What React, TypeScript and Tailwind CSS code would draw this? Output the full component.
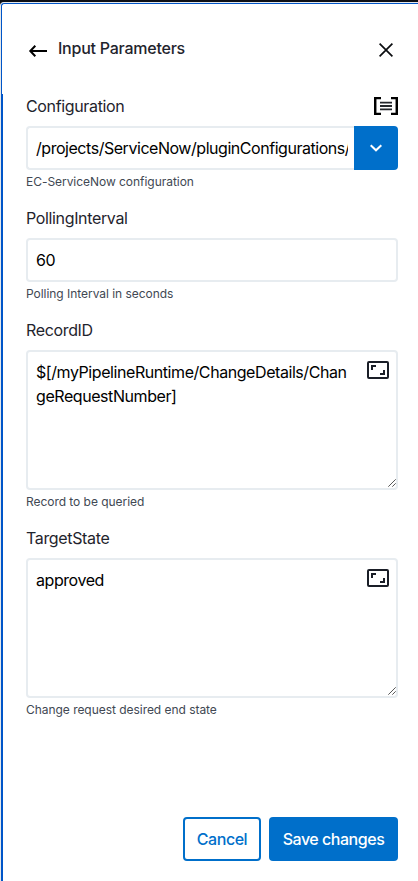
import React from "react";

function BackArrow() {
  return (
    <svg width="20" height="14" viewBox="0 0 20 14" fill="none" stroke="#000" strokeWidth="2">
      <path d="M19 7H2.5M7.3 1.8L2.3 7l5 5.2" />
    </svg>
  );
}

function CloseIcon() {
  return (
    <svg width="14" height="14" viewBox="0 0 14 14" fill="none" stroke="#0b0d10" strokeWidth="1.7">
      <path d="M.6.6l12.8 12.8M13.4.6L.6 13.4" />
    </svg>
  );
}

function BracketIcon() {
  return (
    <svg width="24" height="18" viewBox="0 0 24 18" fill="none">
      <path d="M7 1H1.2v16H7M17 1h5.8v16H17" stroke="#000" strokeWidth="2.5" />
      <path d="M6 5.7h12M6 9h12M6 12.3h12" stroke="#24272c" strokeWidth="1.8" />
    </svg>
  );
}

function ExpandIcon() {
  return (
    <svg width="22" height="18" viewBox="0 0 22 18" fill="none" stroke="#1a1e27" strokeWidth="2">
      <rect x="1" y="1" width="20" height="16" rx="1" />
      <path d="M5 9V5h4M13 13h4V9" />
    </svg>
  );
}

function ResizeGrip() {
  return (
    <svg width="8" height="8" viewBox="0 0 8 8" fill="none" stroke="#444" strokeWidth=".9">
      <path d="M.3 7.7L7.7.3M4.3 7.7l3.4-3.4" />
    </svg>
  );
}

function Field({ label, hint, icon, children }: { label: string; hint: string; icon?: React.ReactNode; children: React.ReactNode }) {
  return (
    <div className="flex flex-col">
      <div className="mb-2 flex h-6 items-center justify-between">
        <span className="text-base tracking-[-0.35px] text-[#1f242d]">{label}</span>
        {icon}
      </div>
      {children}
      <div className="mt-1 text-xs leading-4 tracking-[-0.04px] text-[#414853]">{hint}</div>
    </div>
  );
}

function Area({ text }: { text: string }) {
  return (
    <div className="relative h-[140px] rounded border-2 border-[#e7ecf0] py-2 pl-2 pr-[42px] text-base tracking-[-0.43px] break-all text-black">
      {text}
      <div className="absolute top-[9px] right-[7px]"><ExpandIcon /></div>
      <div className="absolute right-0 bottom-[1px]"><ResizeGrip /></div>
    </div>
  );
}

export default function App() {
  return (
    <div className="flex h-[881px] w-[418px] flex-col overflow-hidden bg-[#0d0f15] pt-[2px] font-['Inter',sans-serif]">
      <div className="flex grow flex-col rounded-tl border-t border-l border-[#e4e7ea] bg-white">
        <div className="flex grow flex-col rounded-tl-[3px] border-t border-l border-[#0055c8]">
          <header className="flex h-[90px] items-center justify-between pr-[25px] pl-[26px]">
            <div className="flex items-center gap-[10px]">
              <div className="pt-[3px]"><BackArrow /></div>
              <h1 className="pb-[2px] text-base font-medium tracking-[-0.24px] text-[#1f242d]">Input Parameters</h1>
            </div>
            <div className="pt-[2px]"><CloseIcon /></div>
          </header>
          <div className="flex grow flex-col border-l border-[#0055c8] pr-5 pb-5 pl-[23px]">
            <main className="flex grow flex-col gap-4">
              <Field label="Configuration" hint="EC-ServiceNow configuration" icon={<BracketIcon />}>
                <div className="flex h-11">
                  <div className="flex w-[328px] items-center rounded-l border-2 border-r-0 border-[#e7ecf0] pr-[6px] pl-2">
                    <div className="overflow-hidden text-base tracking-[-0.46px] whitespace-nowrap text-black">/projects/ServiceNow/pluginConfigurations/</div>
                  </div>
                  <div className="flex w-11 items-center justify-center rounded-r bg-[#006fca]">
                    <svg width="12" height="8" viewBox="0 0 12 8" fill="none" stroke="#fff" strokeWidth="2">
                      <path d="M.7 1.2L6 6.3l5.3-5.1" />
                    </svg>
                  </div>
                </div>
              </Field>
              <Field label="PollingInterval" hint="Polling Interval in seconds">
                <div className="flex h-11 items-center rounded border-2 border-[#e7ecf0] px-2 text-base tracking-[-0.3px] text-black">60</div>
              </Field>
              <Field label="RecordID" hint="Record to be queried">
                <Area text="$[/myPipelineRuntime/ChangeDetails/ChangeRequestNumber]" />
              </Field>
              <Field label="TargetState" hint="Change request desired end state">
                <Area text="approved" />
              </Field>
            </main>
            <footer className="flex justify-end gap-2 text-base font-medium tracking-[-0.47px]">
              <button className="h-11 w-[78px] rounded border-2 border-[#006fca] text-[#006fca]">Cancel</button>
              <button className="h-11 w-[129px] rounded bg-[#006fca] text-white">Save changes</button>
            </footer>
          </div>
        </div>
      </div>
    </div>
  );
}
